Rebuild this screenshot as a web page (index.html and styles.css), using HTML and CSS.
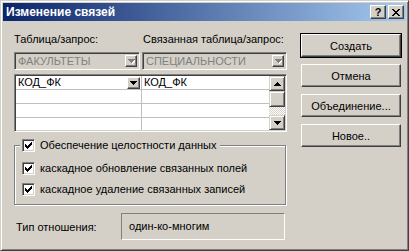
FILE: index.html
```html
<!DOCTYPE html>
<html lang="ru">
<head>
    <meta charset="UTF-8">
    <title>Изменение связей</title>
    <link rel="stylesheet" href="styles.css">
</head>
<body>
    <div class="window">
        <div class="titlebar">
            <span class="title">Изменение связей</span>
            <div class="caption-buttons">
                <span class="cap-btn help">?</span>
                <span class="cap-btn close">
                    <svg width="8" height="7" viewBox="0 0 8 7" shape-rendering="crispEdges">
                        <path d="M0 0h2v1h1v1h2v-1h1v-1h2v1h-1v1h-1v1h-1v1h1v1h1v1h1v1h-2v-1h-1v-1h-2v1h-1v1h-2v-1h1v-1h1v-1h1v-1h-1v-1h-1v-1h-1z" fill="#000"/>
                    </svg>
                </span>
            </div>
        </div>
        <div class="client">
            <div class="main">
                <div class="labels">
                    <span class="label-left">Таблица/запрос:</span>
                    <span class="label-right">Связанная таблица/запрос:</span>
                </div>
                <div class="combos">
                    <div class="combo combo-left">
                        <span class="combo-text">ФАКУЛЬТЕТЫ</span>
                        <span class="drop-btn disabled">
                            <svg width="7" height="5" viewBox="0 0 7 5" shape-rendering="crispEdges"><path d="M1 1h7v1h-1v1h-1v1h-1v1h-1v-1h-1v-1h-1v-1h-1z" fill="#fff"/><path d="M0 0h7v1h-1v1h-1v1h-1v1h-1v-1h-1v-1h-1v-1h-1z" fill="#808080"/></svg>
                        </span>
                    </div>
                    <div class="combo combo-right">
                        <span class="combo-text">СПЕЦИАЛЬНОСТИ</span>
                        <span class="drop-btn disabled">
                            <svg width="7" height="5" viewBox="0 0 7 5" shape-rendering="crispEdges"><path d="M1 1h7v1h-1v1h-1v1h-1v1h-1v-1h-1v-1h-1v-1h-1z" fill="#fff"/><path d="M0 0h7v1h-1v1h-1v1h-1v1h-1v-1h-1v-1h-1v-1h-1z" fill="#808080"/></svg>
                        </span>
                    </div>
                </div>
                <div class="grid">
                    <div class="grid-col col-a">
                        <div class="cell cell-active">
                            <span>КОД_ФК</span>
                            <span class="drop-btn small">
                                <svg width="7" height="4" viewBox="0 0 7 4" shape-rendering="crispEdges"><path d="M0 0h7v1h-1v1h-1v1h-1v1h-1v-1h-1v-1h-1v-1h-1z" fill="#000"/></svg>
                            </span>
                        </div>
                        <div class="cell"></div>
                        <div class="cell"></div>
                        <div class="cell"></div>
                    </div>
                    <div class="grid-col col-b">
                        <div class="cell">КОД_ФК</div>
                        <div class="cell"></div>
                        <div class="cell"></div>
                        <div class="cell"></div>
                    </div>
                    <div class="scrollbar">
                        <span class="sb-btn">
                            <svg width="7" height="4" viewBox="0 0 7 4" shape-rendering="crispEdges"><path d="M3 0h1v1h1v1h1v1h1v1h-7v-1h1v-1h1v-1h1z" fill="#000"/></svg>
                        </span>
                        <span class="sb-thumb"></span>
                        <span class="sb-track"></span>
                        <span class="sb-btn">
                            <svg width="7" height="4" viewBox="0 0 7 4" shape-rendering="crispEdges"><path d="M0 0h7v1h-1v1h-1v1h-1v1h-1v-1h-1v-1h-1v-1h-1z" fill="#000"/></svg>
                        </span>
                    </div>
                </div>
                <fieldset class="group">
                    <legend class="check-row">
                        <span class="checkbox"><svg width="7" height="7" viewBox="0 0 7 7" shape-rendering="crispEdges"><path d="M6 0h1v3h-1v1h-1v1h-1v1h-1v1h-1v-1h-1v-1h-1v-3h1v1h1v1h1v-1h1v-1h1v-1h1z" fill="#000"/></svg></span>
                        Обеспечение целостности данных
                    </legend>
                    <div class="check-row">
                        <span class="checkbox"><svg width="7" height="7" viewBox="0 0 7 7" shape-rendering="crispEdges"><path d="M6 0h1v3h-1v1h-1v1h-1v1h-1v1h-1v-1h-1v-1h-1v-3h1v1h1v1h1v-1h1v-1h1v-1h1z" fill="#000"/></svg></span>
                        каскадное обновление связанных полей
                    </div>
                    <div class="check-row">
                        <span class="checkbox"><svg width="7" height="7" viewBox="0 0 7 7" shape-rendering="crispEdges"><path d="M6 0h1v3h-1v1h-1v1h-1v1h-1v1h-1v-1h-1v-1h-1v-3h1v1h1v1h1v-1h1v-1h1v-1h1z" fill="#000"/></svg></span>
                        каскадное удаление связанных записей
                    </div>
                </fieldset>
                <div class="type-row">
                    <span class="type-label">Тип отношения:</span>
                    <div class="type-box">один-ко-многим</div>
                </div>
            </div>
            <div class="side">
                <button class="button default">Создать</button>
                <button class="button">Отмена</button>
                <button class="button">Объединение...</button>
                <button class="button">Новое..</button>
            </div>
        </div>
    </div>
</body>
</html>
```

FILE: styles.css
```css
body {
    margin: 0;
    background-color: #d4d0c8;
    font-family: "Liberation Sans", Arial, sans-serif;
    font-size: 11px;
    color: #000;
}
.window {
    width: 409px;
    height: 251px;
    box-sizing: border-box;
    background-color: #d4d0c8;
    border: 1px solid;
    border-color: #d4d0c8 #404040 #404040 #d4d0c8;
    box-shadow: inset 1px 1px 0 #fff, inset -1px -1px 0 #808080;
    padding: 2px;
}
.titlebar {
    height: 18px;
    display: flex;
    align-items: center;
    justify-content: space-between;
    background: linear-gradient(to right, #0a246a, #a6caf0);
    padding: 0 2px 0 3px;
}
.title {
    color: #fff;
    font-weight: bold;
    font-size: 12px;
}
.caption-buttons {
    display: flex;
    gap: 2px;
}
.cap-btn {
    width: 16px;
    height: 14px;
    box-sizing: border-box;
    background-color: #d4d0c8;
    border: 1px solid;
    border-color: #fff #404040 #404040 #fff;
    box-shadow: inset -1px -1px 0 #808080;
    display: flex;
    align-items: center;
    justify-content: center;
    font-weight: bold;
    font-size: 11px;
    line-height: 12px;
}

.client {
    display: flex;
    padding: 12px 0 0 11px;
}
.main {
    width: 273px;
}
.labels {
    display: flex;
    height: 13px;
    line-height: 13px;
}
.label-left {
    width: 129px;
}

.combos {
    display: flex;
    justify-content: space-between;
    margin-top: 6px;
}
.combo {
    height: 18px;
    box-sizing: border-box;
    border: 1px solid;
    border-color: #808080 #fff #fff #808080;
    box-shadow: inset 1px 1px 0 #404040, inset -1px -1px 0 #d4d0c8;
    padding: 2px;
    display: flex;
    align-items: center;
    justify-content: space-between;
}
.combo-left {
    width: 126px;
}
.combo-right {
    width: 145px;
}
.combo-text {
    color: #808080;
    padding-left: 1px;
}
.drop-btn {
    width: 12px;
    height: 12px;
    box-sizing: border-box;
    background-color: #d4d0c8;
    border: 1px solid;
    border-color: #fff #404040 #404040 #fff;
    box-shadow: inset -1px -1px 0 #808080;
    display: flex;
    align-items: center;
    justify-content: center;
}
.drop-btn svg {
    display: block;
}

.grid {
    margin-top: 4px;
    height: 58px;
    box-sizing: border-box;
    border: 1px solid;
    border-color: #808080 #fff #fff #808080;
    box-shadow: inset 1px 1px 0 #404040, inset -1px -1px 0 #d4d0c8;
    padding: 1px;
    display: flex;
    background-color: #fff;
    overflow: hidden;
}
.grid-col {
    display: flex;
    flex-direction: column;
}
.col-a {
    width: 125px;
    border-right: 1px solid #c0c0c0;
}
.col-b {
    flex: 1;
}
.cell {
    height: 13px;
    flex: none;
    border-bottom: 1px solid #c0c0c0;
    line-height: 13px;
    padding-left: 2px;
}
.cell-active {
    display: flex;
    justify-content: space-between;
    align-items: center;
    padding-right: 1px;
}
.drop-btn.small {
    width: 13px;
    height: 12px;
}
.scrollbar {
    width: 16px;
    display: flex;
    flex-direction: column;
}
.sb-btn,
.sb-thumb {
    height: 15px;
    box-sizing: border-box;
    background-color: #d4d0c8;
    border: 1px solid;
    border-color: #d4d0c8 #404040 #404040 #d4d0c8;
    box-shadow: inset 1px 1px 0 #fff, inset -1px -1px 0 #808080;
    display: flex;
    align-items: center;
    justify-content: center;
}
.sb-thumb {
    height: 16px;
}
.sb-track {
    flex: 1;
    background-color: #eae8e4;
    background-image: repeating-conic-gradient(#fff 0 25%, #d4d0c8 0 50%);
    background-size: 2px 2px;
}

.group {
    margin: 7px 0 0 0;
    width: 272px;
    box-sizing: border-box;
    padding: 0 0 8px 5px;
    border: 1px solid #808080;
    box-shadow: 1px 1px 0 #fff, inset 1px 1px 0 #fff;
}
.group legend {
    padding: 0 4px 0 2px;
    background-color: #d4d0c8;
}
.check-row {
    display: flex;
    align-items: center;
    gap: 5px;
    height: 13px;
    line-height: 13px;
    margin-top: 8px;
    padding-left: 2px;
}
.group legend.check-row {
    margin-top: 0;
    padding-left: 2px;
}
.group legend + .check-row {
    margin-top: 10px;
}
.checkbox {
    width: 13px;
    height: 13px;
    box-sizing: border-box;
    flex: none;
    background-color: #fff;
    border: 1px solid;
    border-color: #808080 #fff #fff #808080;
    box-shadow: inset 1px 1px 0 #404040, inset -1px -1px 0 #d4d0c8;
    display: flex;
    align-items: center;
    justify-content: center;
}

.type-row {
    display: flex;
    align-items: center;
    margin-top: 8px;
}
.type-label {
    width: 105px;
    padding-left: 2px;
}
.type-box {
    width: 164px;
    height: 27px;
    box-sizing: border-box;
    border: 1px solid;
    border-color: #808080 #fff #fff #808080;
    line-height: 25px;
    padding-left: 7px;
}

.side {
    margin-left: 14px;
    width: 100px;
    display: flex;
    flex-direction: column;
    gap: 7px;
    padding-top: 1px;
}
.button {
    height: 23px;
    width: 100px;
    box-sizing: border-box;
    font-family: inherit;
    font-size: 11px;
    color: #000;
    background-color: #d4d0c8;
    border: 1px solid;
    border-color: #fff #404040 #404040 #fff;
    box-shadow: inset -1px -1px 0 #808080;
    padding: 0;
}
.button.default {
    outline: 1px solid #000;
}
```
